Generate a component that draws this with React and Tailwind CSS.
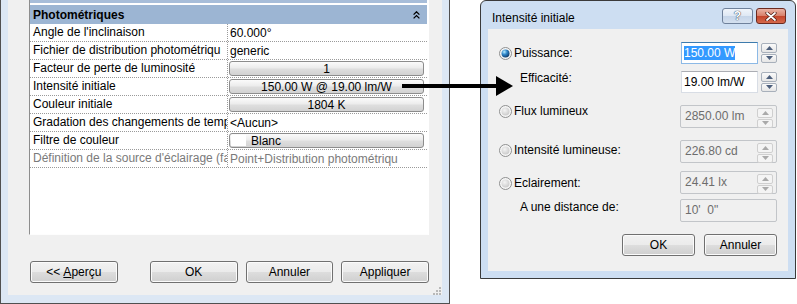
import React from "react";

const winBtn =
  "h-[22px] rounded-[3px] border border-[#707070] bg-[linear-gradient(to_bottom,#f2f2f2_0%,#ebebeb_48%,#dddddd_52%,#cfcfcf_100%)] shadow-[inset_0_0_0_1px_#fbfbfb] flex items-center justify-center text-black";

const cellBtn =
  "ml-[1px] h-[15px] w-[195px] rounded-[3px] border border-[#8c8c8c] bg-[linear-gradient(to_bottom,#fbfbfb_0%,#ececec_45%,#dedede_55%,#d2d2d2_100%)] flex items-center";

// labels are shown as the grid clips them
const rows = [
  { label: "Angle de l'inclinaison", value: "60.000°" },
  { label: "Fichier de distribution photométriqu", value: "generic" },
  { label: "Facteur de perte de luminosité", value: "1", kind: "button" },
  { label: "Intensité initiale", value: "150.00 W @ 19.00 lm/W", kind: "button" },
  { label: "Couleur initiale", value: "1804 K", kind: "button" },
  { label: "Gradation des changements de temp", value: "<Aucun>" },
  { label: "Filtre de couleur", value: "Blanc", kind: "swatch" },
  {
    label: "Définition de la source d'éclairage (fa",
    value: "Point+Distribution photométriqu",
    muted: true,
  },
];

const Radio = ({ checked }) => (
  <svg width="13" height="13" viewBox="0 0 13 13" className="shrink-0">
    <defs>
      <radialGradient id="rOff" cx="40%" cy="35%" r="70%">
        <stop offset="0" stopColor="#f4f4f4" />
        <stop offset="1" stopColor="#c9c9c9" />
      </radialGradient>
      <radialGradient id="rOn" cx="35%" cy="30%" r="75%">
        <stop offset="0" stopColor="#b8ecff" />
        <stop offset="0.45" stopColor="#2f86c9" />
        <stop offset="1" stopColor="#0d3766" />
      </radialGradient>
    </defs>
    <circle cx="6.5" cy="6.5" r="6" fill="#f6f6f6" stroke="#8e8f8f" />
    <circle cx="6.5" cy="6.5" r="4" fill={checked ? "url(#rOn)" : "url(#rOff)"} />
  </svg>
);

const Tri = ({ up, color }) => (
  <svg width="7" height="4" viewBox="0 0 7 4">
    <path d={up ? "M0 4 L3.5 0 L7 4 Z" : "M0 0 L3.5 4 L7 0 Z"} fill={color} />
  </svg>
);

const Spinner = ({ disabled }) => {
  const c = disabled ? "#a9a9a9" : "#4d5f7c";
  const b = disabled
    ? "border-[#cfcfcf] bg-[#f4f4f4]"
    : "border-[#a8b0bb] bg-[linear-gradient(to_bottom,#fafafa,#e6e6e6)]";
  return (
    <div className="flex h-[20px] w-[16px] flex-col gap-[1px]">
      <div className={`flex flex-1 items-center justify-center rounded-[2px] border ${b}`}>
        <Tri up color={c} />
      </div>
      <div className={`flex flex-1 items-center justify-center rounded-[2px] border ${b}`}>
        <Tri color={c} />
      </div>
    </div>
  );
};

const Field = ({ children, focused }) => (
  <div className="flex items-start gap-[3px]">
    <div
      className={`flex h-[22px] w-[77px] items-start bg-white pl-[2px] pt-[3px] leading-[14px] border ${
        focused
          ? "border-[#8cb9e6] border-t-[#3d7bad]"
          : "border-[#d8dde5] border-t-[#abadb3]"
      }`}
    >
      {children}
    </div>
    <div className="pt-[1px]">
      <Spinner />
    </div>
  </div>
);

const DisabledField = ({ value, spinner = true }) => (
  <div className="flex h-[23px] w-[97px] items-start justify-between rounded-[2px] border border-[#c2c5c9] bg-[#f0f0f0] pl-[4px] pr-[3px] pt-[3px] leading-[14px] text-[#6d6d6d]">
    <span className="whitespace-pre">{value}</span>
    {spinner && (
      <div className="-mt-[1px]">
        <Spinner disabled />
      </div>
    )}
  </div>
);

const PropertiesDialog = () => (
  <div className="flex h-[304px] w-[450px] shrink-0 flex-col border-x border-b border-[#505050] bg-[#dce7f4] px-[7px] pb-[8px]">
    <div className="flex flex-1 flex-col bg-[#f0f0f0] pl-[21px] pr-[13px]">
      {/* property grid */}
      <div className="flex h-[235px] flex-col border-l border-b border-[#8d8d8d] border-b-[#fdfdfd] border-r-2 border-r-white bg-white">
        <div className="h-[3px] bg-[#a7bdd9]" />
        <div className="h-[2px] bg-white" />
        <div className="flex h-[19px] items-center justify-between bg-[#9cb5d3] pl-[3px] pr-[7px] font-bold">
          <span>Photométriques</span>
          <svg width="7" height="8" viewBox="0 0 7 8">
            <path d="M0.6 3.6 L3.5 0.8 L6.4 3.6 M0.6 7.4 L3.5 4.6 L6.4 7.4" fill="none" stroke="#000" strokeWidth="1.3" />
          </svg>
        </div>
        {rows.map((r) => (
          <div key={r.label} className="flex h-[18px] border-b border-dotted border-[#9a9a9a]">
            <div
              className={`w-[198px] shrink-0 overflow-hidden whitespace-nowrap border-r border-dotted border-[#9a9a9a] pl-[3px] leading-[17px] ${
                r.muted ? "text-[#7a7a7a]" : "text-black"
              }`}
            >
              {r.label}
            </div>
            <div
              className={`flex flex-1 items-center overflow-hidden whitespace-nowrap ${
                r.muted ? "text-[#7a7a7a]" : "text-black"
              }`}
            >
              {r.kind === "button" && <div className={`${cellBtn} justify-center`}>{r.value}</div>}
              {r.kind === "swatch" && (
                <div className={cellBtn}>
                  <div className="ml-[1px] h-[11px] w-[15px] bg-white" />
                  <span className="ml-[5px]">{r.value}</span>
                </div>
              )}
              {!r.kind && <span className="pl-[2px]">{r.value}</span>}
            </div>
          </div>
        ))}
        <div className="flex-1" />
      </div>

      {/* footer buttons */}
      <div className="ml-[1px] mt-[26px] flex">
        <div className={`${winBtn} w-[88px]`}>
          &lt;&lt; <span className="ml-[3px] underline">A</span>perçu
        </div>
        <div className={`${winBtn} ml-[32px] w-[88px]`}>OK</div>
        <div className={`${winBtn} ml-[8px] w-[88px]`}>Annuler</div>
        <div className={`${winBtn} ml-[8px] w-[88px]`}>Appliquer</div>
      </div>
      <div className="-mr-[12px] mt-[4px] flex justify-end">
        <svg width="8" height="8" viewBox="0 0 8 8">
          {[
            [6, 0],
            [6, 3],
            [3, 3],
            [6, 6],
            [3, 6],
            [0, 6],
          ].map(([x, y]) => (
            <rect key={`${x}-${y}`} x={x} y={y} width="2" height="2" fill="#b8b8b8" />
          ))}
        </svg>
      </div>
    </div>
  </div>
);

const IntensityDialog = () => (
  <div className="ml-[30px] flex h-[279px] w-[316px] shrink-0 flex-col rounded-t-[6px] border border-[#3a3a3a] bg-[#cddef2]">
    {/* title bar */}
    <div className="flex h-[28px] items-start justify-between pl-[11px] pr-[9px]">
      <span className="mt-[10px] leading-[14px] text-black">Intensité initiale</span>
      <div className="mt-[7px] flex gap-[3px]">
        <div className="flex h-[16px] w-[31px] items-center justify-center rounded-[3px] border border-[#6f819b] bg-[linear-gradient(to_bottom,#f1f5fb_0%,#dfe8f4_48%,#c6d5e9_52%,#d4e0ef_100%)] text-[12px] font-bold leading-none text-white [text-shadow:0_0_1px_#2d3b50,0_0_1px_#2d3b50]">
          ?
        </div>
        <div className="flex h-[16px] w-[30px] items-center justify-center rounded-[3px] border border-[#6b2a20] bg-[linear-gradient(to_bottom,#eab3a5_0%,#d8806b_48%,#c4452c_52%,#d5694c_100%)]">
          <svg width="12" height="9" viewBox="0 0 12 9">
            <path d="M2 1 L10 8 M10 1 L2 8" stroke="#4a1a12" strokeWidth="3.2" strokeLinecap="round" />
            <path d="M2 1 L10 8 M10 1 L2 8" stroke="#fff" strokeWidth="1.8" strokeLinecap="round" />
          </svg>
        </div>
      </div>
    </div>

    {/* client */}
    <div className="mx-[7px] flex h-[242px] flex-col bg-[#f0f0f0] pl-[11px] pr-[11px] pt-[13px] leading-[14px] text-black">
      <div className="flex h-[29px] items-start justify-between">
        <div className="mt-[4px] flex items-center gap-[2px]">
          <Radio checked />
          <span>Puissance:</span>
        </div>
        <Field focused>
          <span className="bg-[#3399ff] text-white">150.00 W</span>
        </Field>
      </div>
      <div className="flex h-[34px] items-start justify-between">
        <span className="ml-[21px]">Efficacité:</span>
        <Field>
          <span>19.00 lm/W</span>
        </Field>
      </div>
      <div className="flex h-[35px] items-start justify-between">
        <div className="-mt-[1px] flex items-center gap-[2px]">
          <Radio />
          <span>Flux lumineux</span>
        </div>
        <DisabledField value="2850.00 lm" />
      </div>
      <div className="flex h-[31px] items-start justify-between">
        <div className="mt-[3px] flex items-center gap-[2px]">
          <Radio />
          <span>Intensité lumineuse:</span>
        </div>
        <DisabledField value="226.80 cd" />
      </div>
      <div className="flex h-[28px] items-start justify-between">
        <div className="mt-[5px] flex items-center gap-[2px]">
          <Radio />
          <span>Eclairement:</span>
        </div>
        <DisabledField value="24.41 lx" />
      </div>
      <div className="flex h-[23px] items-start justify-between">
        <span className="ml-[21px] mt-[1px]">A une distance de:</span>
        <DisabledField value={"10'  0\""} spinner={false} />
      </div>
      <div className="mt-[12px] flex justify-end gap-[9px]">
        <div className={`${winBtn} w-[73px] border-[#3c7fb1] shadow-[inset_0_0_0_1px_#a8dcf8]`}>OK</div>
        <div className={`${winBtn} w-[73px]`}>Annuler</div>
      </div>
    </div>
  </div>
);

export default function App() {
  return (
    <div className="relative flex h-[304px] w-[797px] overflow-hidden bg-white font-['Liberation_Sans',Arial,sans-serif] text-[12px] text-black">
      <PropertiesDialog />
      <IntensityDialog />
      {/* callout arrow */}
      <svg className="pointer-events-none absolute left-0 top-0" width="797" height="304">
        <line x1="402" y1="86" x2="498" y2="86" stroke="#000" strokeWidth="4" />
        <path d="M496 76 L513 86 L496 96 Z" fill="#000" />
      </svg>
    </div>
  );
}
